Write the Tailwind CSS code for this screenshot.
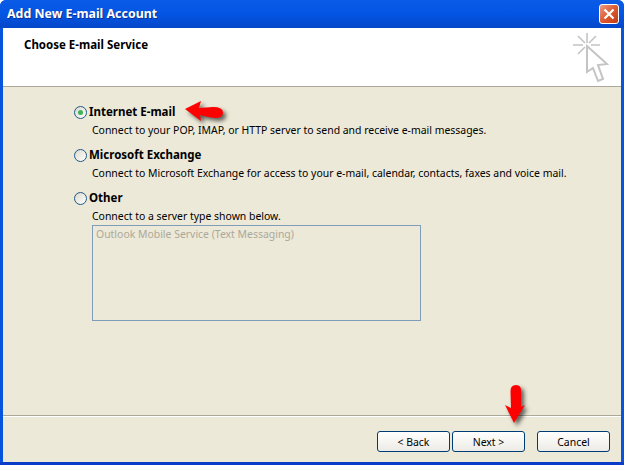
<!DOCTYPE html>
<html lang="en">
<head>
<meta charset="UTF-8">
<title>Add New E-mail Account</title>
<script src="https://cdn.jsdelivr.net/npm/@tailwindcss/browser@4"></script>
</head>
<body class="m-0 overflow-hidden bg-white">
<div class="relative w-[624px] h-[465px] flex flex-col bg-[#0855dd] border-b-[3px] border-b-[#0a3cc8] rounded-t-[6px] font-['Noto_Sans','Liberation_Sans',sans-serif] text-[10.45px] text-black overflow-hidden">
  <!-- title bar -->
  <div class="h-[28px] shrink-0 flex items-center justify-between pl-[7px] pr-[5px] bg-gradient-to-b from-[#0a5be6] via-[#0355e4] to-[#0446c8]">
    <span class="text-[12.4px] leading-[16px] font-bold text-white [text-shadow:1px_1px_0_#0f2f90]">Add New E-mail Account</span>
    <div class="w-[20px] h-[20px] rounded-[3px] border border-white bg-gradient-to-br from-[#e99a80] via-[#dd5a30] to-[#c03a10] flex items-center justify-center">
      <svg width="12" height="12" viewBox="0 0 12 12"><path d="M1.500 1.500 10.500 10.500M10.500 1.500 1.500 10.500" stroke="#fff" stroke-width="2.2" fill="none"/></svg>
    </div>
  </div>
  <!-- client area -->
  <div class="flex-1 flex flex-col mx-[3px] bg-[#ece9d8]">
    <div class="h-[59px] shrink-0 bg-white border-b border-b-[#aca899] flex justify-between pl-[21px] pr-[12px]">
      <div class="pt-[9px] text-[11.5px] font-bold leading-[16px]">Choose E-mail Service</div>
      <svg class="mt-[5px]" width="36" height="50" viewBox="0 0 36 50" fill="none" stroke="#c4c4c4" stroke-width="1.6">
        <path d="M14 0v10M0 12h10M18 12h9M5 3l7 7M23 3l-7 7M5 21l7-7"/>
        <path d="M14 13 34 31 25 32 30 46 25 48 20 35 14 39Z" stroke-width="2" fill="#fff"/>
      </svg>
    </div>
    <div class="flex-1 pl-[71px] pt-[16px]">
      <div class="flex items-center h-[18px]">
        <span class="w-[13px] h-[13px] mr-[2px] rounded-full border border-[#1d5a8a] bg-gradient-to-br from-[#dcd9cc] to-white flex items-center justify-center">
          <span class="w-[5px] h-[5px] rounded-full bg-[#3fb35c]"></span>
        </span>
        <span class="text-[11.5px] font-bold">Internet E-mail</span>
      </div>
      <p class="ml-[18px] mt-[1px] leading-[17px]">Connect to your POP, IMAP, or HTTP server to send and receive e-mail messages.</p>
      <div class="flex items-center h-[18px] mt-[7px]">
        <span class="w-[13px] h-[13px] mr-[2px] rounded-full border border-[#1d5a8a] bg-gradient-to-br from-[#dcd9cc] to-white"></span>
        <span class="text-[11.5px] font-bold">Microsoft Exchange</span>
      </div>
      <p class="ml-[18px] mt-[1px] leading-[17px]">Connect to Microsoft Exchange for access to your e-mail, calendar, contacts, faxes and voice mail.</p>
      <div class="flex items-center h-[18px] mt-[7px]">
        <span class="w-[13px] h-[13px] mr-[2px] rounded-full border border-[#1d5a8a] bg-gradient-to-br from-[#dcd9cc] to-white"></span>
        <span class="text-[11.5px] font-bold">Other</span>
      </div>
      <p class="ml-[18px] mt-[1px] leading-[17px]">Connect to a server type shown below.</p>
      <div class="ml-[18px] w-[329px] h-[96px] border border-[#7f9db9] px-[3px] py-[1px] leading-[15px] text-[#aca899]">Outlook Mobile Service (Text Messaging)</div>
    </div>
    <!-- footer -->
    <div class="h-[47px] shrink-0 border-t border-t-[#aca899] shadow-[inset_0_1px_0_#fff] flex items-start justify-end pt-[15px] pr-[11px] bg-[#ece9d8]">
      <button class="w-[73px] h-[21px] rounded-[3px] border border-[#003c74] bg-gradient-to-b from-white to-[#ecebe5] leading-[18px]">&lt; Back</button>
      <button class="ml-[2px] w-[73px] h-[21px] rounded-[3px] border border-[#003c74] bg-gradient-to-b from-white to-[#ecebe5] leading-[18px]">Next &gt;</button>
      <button class="ml-[12px] w-[73px] h-[21px] rounded-[3px] border border-[#003c74] bg-gradient-to-b from-white to-[#ecebe5] leading-[18px]">Cancel</button>
    </div>
  </div>
  <!-- red arrows drawn over the dialog -->
  <svg class="absolute left-[183px] top-[98px] drop-shadow-[3px_3px_2px_rgba(0,0,0,0.6)]" width="42" height="24" viewBox="0 0 42 24">
    <path d="M2 11 18 3 16 10 30 9Q40 9 40 14.500T32 20L25 19 17 17 18 23Z" fill="#f00"/>
  </svg>
  <svg class="absolute left-[504px] top-[385px] drop-shadow-[3px_3px_2px_rgba(0,0,0,0.6)]" width="22" height="39" viewBox="0 0 22 39">
    <path d="M10 38 1 20 7 23 6.500 6Q6.500 0 12 0T17 6V22L21 20Z" fill="#f00"/>
  </svg>
</div>
</body>
</html>
